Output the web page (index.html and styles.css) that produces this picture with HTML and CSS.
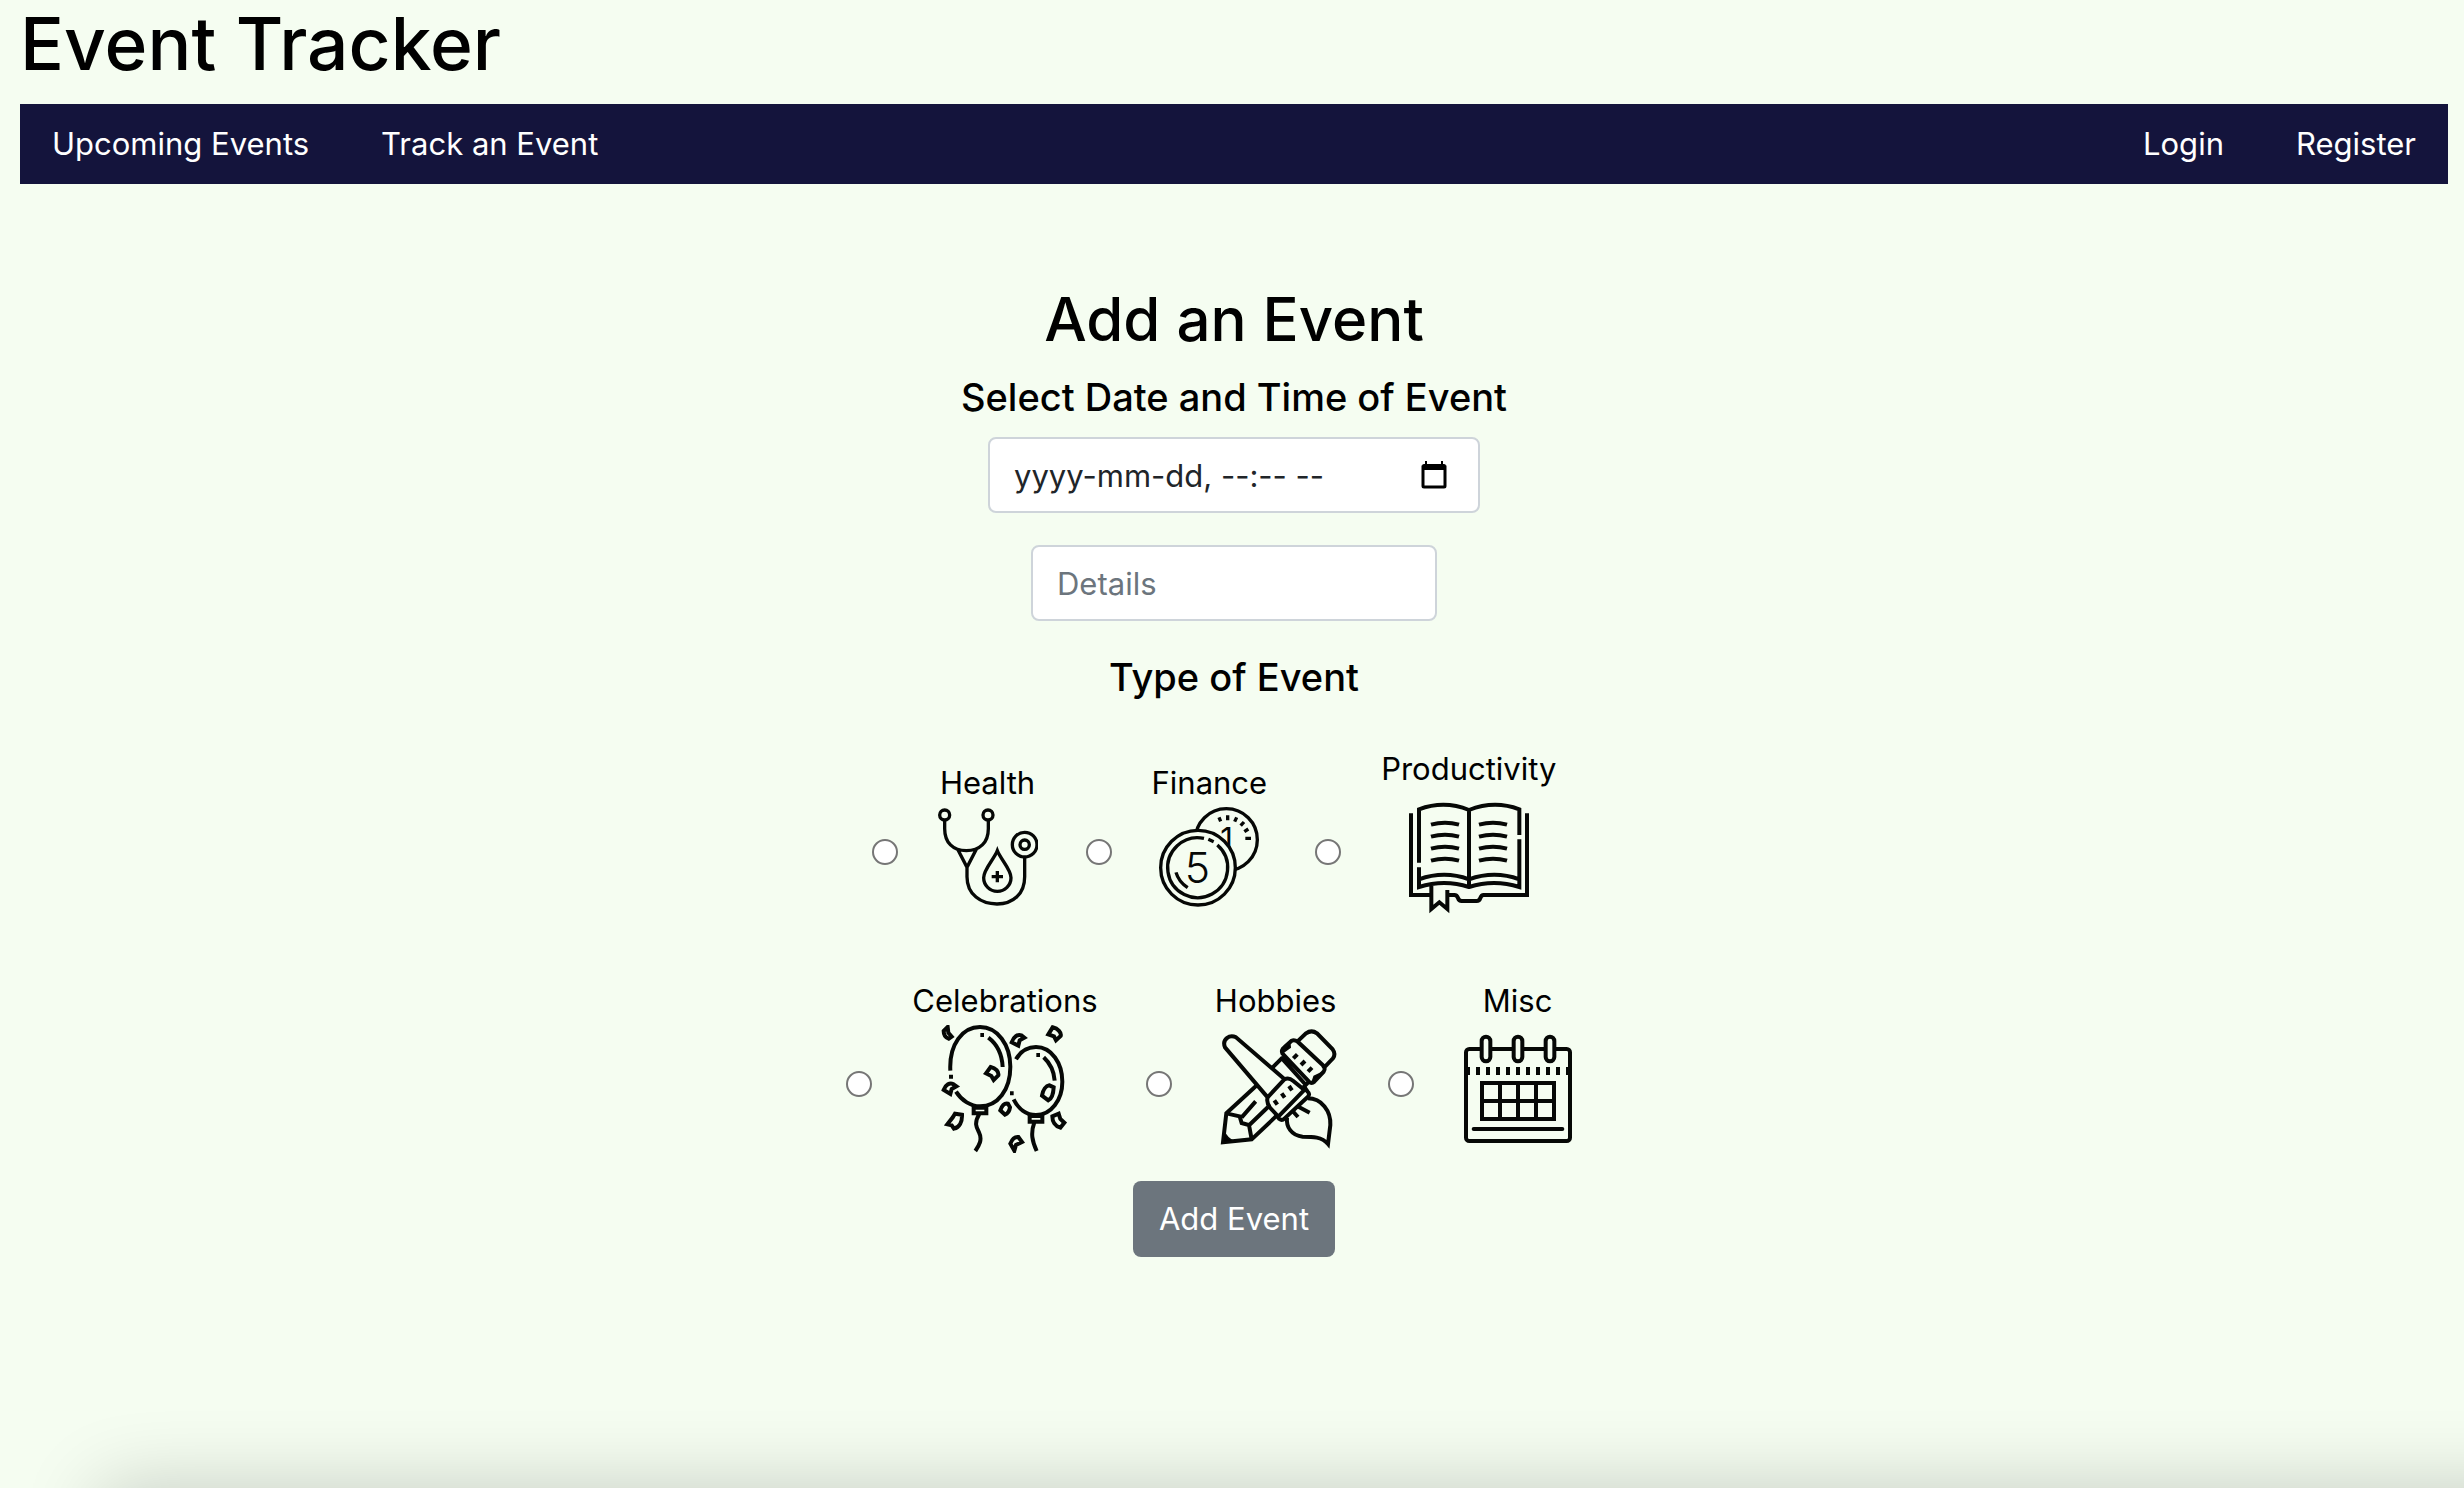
FILE: index.html
```html
<!DOCTYPE html>
<html lang="en">
<head>
<meta charset="utf-8">
<meta name="viewport" content="width=device-width, initial-scale=1">
<title>Event Tracker</title>
<link rel="stylesheet" href="styles.css">
</head>
<body>
<header>
  <h1 class="site-title">Event Tracker</h1>
  <nav class="navbar">
    <div class="nav-group">
      <a class="nav-link" href="#upcoming">Upcoming Events</a>
      <a class="nav-link" href="#track">Track an Event</a>
    </div>
    <div class="nav-group">
      <a class="nav-link" href="#login">Login</a>
      <a class="nav-link" href="#register">Register</a>
    </div>
  </nav>
</header>
<main>
  <form class="event-form">
    <h2 class="form-title">Add an Event</h2>
    <label class="form-heading" for="when">Select Date and Time of Event</label>
    <div class="field date-field">
      <input class="field-input date-input" id="when" type="text" placeholder="yyyy-mm-dd, --:-- --">
      <button class="picker" type="button" aria-label="Open calendar">
        <svg class="picker-icon" viewBox="0 0 26 28"><path d="M2 6h22v19a1 1 0 0 1-1 1H3a1 1 0 0 1-1-1z" fill="none" stroke="#000" stroke-width="3"/><path d="M1 9V5a2 2 0 0 1 2-2h1V0h2v3h14V0h2v3h1a2 2 0 0 1 2 2v4z"/></svg>
      </button>
    </div>
    <div class="field">
      <input class="field-input" type="text" placeholder="Details" aria-label="Details">
    </div>
    <fieldset class="types">
      <legend class="form-heading">Type of Event</legend>
      <div class="type-row">
        <div class="option">
          <input class="radio" type="radio" name="type" id="health">
          <label class="tile" for="health">Health
            <svg class="icon icon-small" viewBox="237 201 300 300" stroke-width="10">
              <circle cx="257" cy="225" r="15"/><circle cx="387" cy="225" r="15"/>
              <path d="M257 241v25c0 42 25 66 65 66s66-24 66-66v-25M296 328l28 54 28-54M324 382v28c0 54 42 82 90 82s83-30 83-82v-58"/>
              <circle cx="497" cy="314" r="37"/><circle cx="497" cy="314" r="14"/>
              <path d="M415 332c-10 26-41 56-41 81a41 41 0 0 0 82 0c0-25-31-55-41-81zM415 393v34M398 410h34"/>
            </svg>
          </label>
        </div>
        <div class="option">
          <input class="radio" type="radio" name="type" id="finance">
          <label class="tile" for="finance">Finance
            <svg class="icon icon-small" viewBox="240 201 300 300" stroke-width="10">
              <circle cx="442" cy="299" r="93"/>
              <path d="M420 232l5 12M446 226v15M473 232l-6 13M495 246l-10 11M508 267l-12 8M516 295h-17"/>
              <text class="coin-one" x="424" y="331">1</text>
              <circle class="front" cx="357" cy="383" r="112"/>
              <path d="M415 315A90 90 0 1 1 375 295M388 298l16 7M291 397q8 28 35 46"/>
              <text class="coin-five" x="317" y="430">5</text>
            </svg>
          </label>
        </div>
        <div class="option">
          <input class="radio" type="radio" name="type" id="productivity">
          <label class="tile" for="productivity">Productivity
            <svg class="icon" viewBox="312 159 384 384" stroke-width="12">
              <path d="M330 220v245h58M678 220v245H548q-7 0-10 9t-11 9h-45q-8 0-11-9t-11-9h-19M391 438v69l24-20 24 20v-57"/>
              <path d="M354 368V208q76-28 150 2q76-30 151-2v77M655 298v143q-76-24-151 0q-74-24-150 0v-59M504 210v231M354 418q76-27 150 0q76-27 151 0"/>
              <path d="M390 254q42-12 84 0M390 290q42-12 84 0M390 326q42-12 84 0M390 362q42-12 84 0M534 254q42-12 84 0M534 290q42-12 84 0M534 326q42-12 84 0M534 362q42-12 84 0"/>
            </svg>
          </label>
        </div>
      </div>
      <div class="type-row">
        <div class="option">
          <input class="radio" type="radio" name="type" id="celebrations">
          <label class="tile" for="celebrations">Celebrations
            <svg class="icon" viewBox="300 165 384 384" stroke-width="12">
              <path d="M328 302C324 222 365 171 417 171c53 0 91 54 91 119 0 70-38 119-91 119-27 0-55-17-72-44M442 203q40 30 43 88M525 268c14-25 34-37 60-37 47 0 79 49 79 104s-34 100-79 100c-30 0-54-20-67-47M608 262q30 28 33 70"/>
              <path d="M418 195h11M324 320h12M586 255h11M507 370h11"/>
              <path d="M398 413h38v17h-38zM566 438h38v17h-38zM415 432c-17 28-8 42-1 55 11 22 0 40-11 56M580 457c-12 33-6 58 7 86"/>
              <path d="M308 183l12-12 2 17 10 12-9 6c-11-4-15-12-15-23zM512 217c6-17 18-25 29-21l9 7-14 8-4 16zM622 193l13-21c16 3 27 16 24 26l-14 13-6-12zM435 310l14-19c15 3 25 14 23 25l-14 14-7-12zM308 360c6-17 19-23 28-18l10 7-14 8-4 15zM336 441l6-10 21 3c1 22-8 38-24 42l-7-10-13-3zM478 421c5-14 14-22 23-20l6 11c-2 13-7 19-15 22zM603 377c3-18 12-30 22-31l13 6c-1 20-6 34-16 39zM634 439l19-8 5 16 12 11-12 15c-16-4-24-18-24-34zM508 521c5-13 14-21 24-20l11 15-18 9-5 17z"/>
            </svg>
          </label>
        </div>
        <div class="option">
          <input class="radio" type="radio" name="type" id="hobbies">
          <label class="tile" for="hobbies">Hobbies
            <svg class="icon" viewBox="273 165 384 384" stroke-width="12">
              <path d="M438 380L312 232c-10-24 14-40 33-30l145 125M490 328q14-6 26 4l34 28-78 80-24-26q-13-16-8-32zM463 432l12 15q8 6 16-2l69-64q8-8 0-16l-10-14"/>
              <path d="M560 385c42 0 70 38 68 80l-7 57c-19-22-46-22-76-22-34-3-50-30-47-57M512 420l19 21M528 408l38 20M460 391l9 13M482 370l9 13M504 348l9 13"/>
              <path d="M405 348l-89 82-10 87 86-9 72-68M316 430l40 9 6 20 22 6 8 43M362 442l42-48M385 465l56-54"/>
              <path d="M484 250q-4-10 6-18l22-20q8-4 18 3l75 70q10 10 3 20l-28 30q-8 7-16 0zM455 292l30-30M480 262l72 80M564 335l-17 17M532 212l23-22q17-12 33 0l47 48q10 14 1 27l-26 27M529 253l-12 12M552 273l-12 12M573 293l-12 12"/>
              <path d="M306 517l4-32q8 20 30 29zM484 250l22-35 2 17zM608 305l-35 32 6-18z" fill="#000" stroke-width="4"/>
            </svg>
          </label>
        </div>
        <div class="option">
          <input class="radio" type="radio" name="type" id="misc">
          <label class="tile" for="misc">Misc
            <svg class="icon" viewBox="279 165 384 384" stroke-width="12">
              <rect x="315" y="237" width="312" height="276" rx="10"/>
              <g class="front"><rect x="362" y="200" width="26" height="74" rx="13"/><rect x="458" y="200" width="26" height="74" rx="13"/><rect x="554" y="200" width="26" height="74" rx="13"/></g>
              <path d="M321 291v24M351 291v24M381 291v24M411 291v24M441 291v24M471 291v24M501 291v24M531 291v24M561 291v24M591 291v24M621 291v24M363 339h216v108H363zM417 339v108M471 339v108M525 339v108M363 393h216"/>
              <path d="M338 477h266" stroke-linecap="round"/>
            </svg>
          </label>
        </div>
      </div>
    </fieldset>
    <button class="submit" type="submit">Add Event</button>
  </form>
</main>
<div class="bottom-shade"></div>
</body>
</html>
```
FILE: styles.css
```css
* {
  box-sizing: border-box;
}

body {
  margin: 0;
  padding: 0 16px 0 20px;
  background: #f5fdf1;
  color: #000;
  font: 400 31px/48px Inter, "Liberation Sans", sans-serif;
}

.site-title {
  margin: 0 0 16px;
  font-size: 73px;
  font-weight: 500;
  line-height: 88px;
}

.navbar {
  display: flex;
  justify-content: space-between;
  padding: 16px 32px;
  background: #14143c;
}

.nav-group {
  display: flex;
  gap: 72px;
}

.nav-link {
  color: #fff;
  text-decoration: none;
}

.event-form {
  display: flex;
  flex-direction: column;
  align-items: center;
  padding-top: 97px;
}

.form-title {
  margin: 0 0 16px;
  font-size: 60px;
  font-weight: 500;
  line-height: 76px;
}

.form-heading {
  padding: 0;
  font-size: 38px;
  font-weight: 500;
  line-height: 48px;
}

.field {
  position: relative;
  width: 406px;
  margin-top: 32px;
}

.date-field {
  width: 492px;
  margin-top: 16px;
}

.field-input {
  display: block;
  width: 100%;
  height: 76px;
  padding: 12px 24px;
  border: 2px solid #ced4da;
  border-radius: 8px;
  background: #fff;
  font: inherit;
}

.field-input::placeholder {
  color: #6c757d;
  opacity: 1;
}

.date-input::placeholder {
  color: #212529;
}

.picker {
  position: absolute;
  top: 24px;
  right: 33px;
  display: flex;
  padding: 0;
  border: 0;
  background: none;
}

.picker-icon {
  width: 26px;
  height: 28px;
}

.types {
  display: flex;
  flex-direction: column;
  gap: 56px;
  margin: 32px 0 28px;
  padding: 0;
  border: 0;
}

.types .form-heading {
  margin: 0 auto 44px;
}

.type-row {
  display: flex;
  align-items: center;
  justify-content: center;
  gap: 8px;
}

.option {
  display: flex;
  align-items: center;
  gap: 40px;
  padding-right: 40px;
}

.radio {
  appearance: none;
  width: 26px;
  height: 26px;
  margin: 38px 0 0;
  border: 2px solid #767676;
  border-radius: 50%;
  background: #fff;
}

.radio:checked {
  border-width: 8px;
  border-color: #0075ff;
}

.tile {
  display: flex;
  flex-direction: column;
  align-items: center;
}

.icon {
  width: 128px;
  height: 128px;
  fill: none;
  stroke: #060806;
}

.icon-small {
  width: 100px;
  height: 100px;
}

.front {
  fill: #f5fdf1;
}

.coin-one,
.coin-five {
  fill: #060806;
  stroke: none;
  font-size: 94px;
}

.coin-five {
  font-size: 128px;
  font-weight: 300;
}

.submit {
  padding: 14px 26px;
  border: 0;
  border-radius: 8px;
  background: #6c757d;
  color: #fff;
  font: inherit;
}

/* soft shade rising from the lower edge of the window */
.bottom-shade {
  position: fixed;
  top: 100%;
  right: -100px;
  left: 100px;
  height: 200px;
  box-shadow: 0 0 80px rgba(0, 0, 0, 0.2);
}
```
